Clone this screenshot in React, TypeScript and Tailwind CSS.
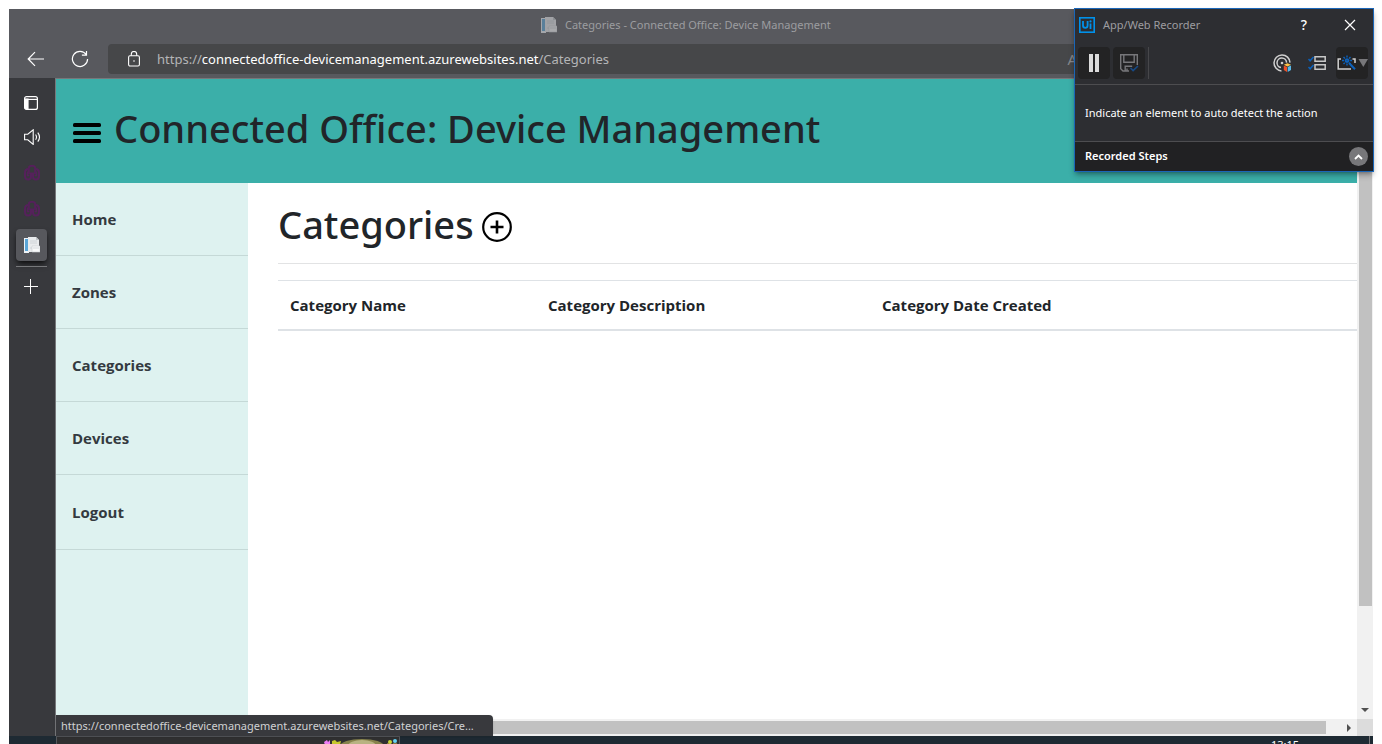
import React from "react";

const navItems = ["Home", "Zones", "Categories", "Devices", "Logout"];

function PageIcon({ className = "" }: { className?: string }) {
  return (
    <svg className={className} width="16" height="16" viewBox="0 0 16 16" aria-hidden="true">
      <path d="M0 1h5v15H0z" fill="#eef3f7" />
      <path d="M1 2h3v12H1z" fill="#5aa5d6" />
      <path d="M4 0h8l3 3v12H4z" fill="#e9ebed" />
      <path d="M12 0v3h3z" fill="#c3c7cb" />
      <path d="M6 4h7M6 6h7M6 11h2" stroke="#cfd4d8" />
      <path d="M8 9h8v6H8z" fill="#f7f8f9" stroke="#c9cdd1" strokeWidth=".6" />
      <path d="M9 11h6" stroke="#d5d9dc" />
    </svg>
  );
}

function ClusterIcon() {
  return (
    <svg width="16" height="16" viewBox="0 0 16 16" fill="none" stroke="#55215b" strokeWidth="2" aria-hidden="true">
      <path d="M4.8 9V3.2a3.2 2.4 0 0 1 6.4 0V9" />
      <path d="M4.6 4C2 4 1 5 1 7.5V11c0 2.5 1 3.5 3.2 3.5S7 13.3 7 11.5v-4" />
      <path d="M11.4 4C14 4 15 5 15 7.5V11c0 2.5-1 3.5-3.2 3.5S9 13.3 9 11.5v-4" />
      <path d="M3.6 6.5v4h1.8M12.4 6.5v4h-1.8" strokeWidth="1.6" />
    </svg>
  );
}

function TitleBar() {
  return (
    <header className="flex shrink-0 flex-col bg-[#58595e]">
      <div className="flex h-[35px] items-center pb-1">
        <div className="ml-[39%] flex items-center gap-2 text-[11px] text-[#9c9da0]">
          <PageIcon className="opacity-50" />
          <span className="pt-px whitespace-nowrap">Categories - Connected Office: Device Management</span>
        </div>
      </div>
      <div className="flex h-[34px] items-center pb-1">
        <button aria-label="Back" className="ml-[18px] h-4 w-[18px] text-white">
          <svg width="18" height="16" viewBox="0 0 18 16" fill="none" stroke="currentColor" strokeWidth="1.2">
            <path d="M8 1.2 1.2 8 8 14.8M1.2 8H17" />
          </svg>
        </button>
        <button aria-label="Refresh" className="ml-[26px] h-[18px] w-[18px] text-white">
          <svg width="18" height="18" viewBox="0 0 18 18" fill="none" stroke="currentColor" strokeWidth="1.2">
            <path d="M15.2 4.5A7.6 7.6 0 1 0 16.6 9M15.5 1v4.2h-4.6" />
          </svg>
        </button>
        <div className="ml-[19px] flex h-[30px] flex-1 items-center rounded-l bg-[#464749] pl-5">
          <svg width="12" height="16" viewBox="0 0 12 16" fill="none" stroke="#fff" strokeWidth="1.1" aria-hidden="true">
            <rect x=".6" y="4.8" width="10.8" height="10.2" rx="1.4" />
            <path d="M3.3 4.8V3.2a2.7 2.7 0 0 1 5.4 0v1.6" />
            <circle cx="6" cy="10" r=".8" fill="#fff" stroke="none" />
          </svg>
          <div
            role="textbox"
            tabIndex={0}
            aria-label="Address"
            className="ml-[17px] pt-px text-[13px] whitespace-nowrap text-[#b4b5b7]"
          >
            https://<span className="text-white">connectedoffice-devicemanagement.azurewebsites.net</span>/Categories
          </div>
          <button aria-label="Read aloud" className="mr-[296px] ml-auto text-[15px] text-[#85868a]">A</button>
        </div>
      </div>
    </header>
  );
}

function TabRail() {
  return (
    <aside className="flex w-[47px] shrink-0 flex-col items-center border-r border-[#77787b] bg-[#38393d] pt-[17px] pr-px">
      <button aria-label="Vertical tabs" className="h-4 w-4">
        <svg width="16" height="16" viewBox="0 0 16 16" fill="none" stroke="#fff" strokeWidth="1.2">
          <rect x=".6" y="1.6" width="12.8" height="12.8" rx="2" />
          <path d="M1 4.4h12" />
          <path d="M1 4h3v10H2l-1-1z" fill="#fff" />
        </svg>
      </button>
      <button aria-label="Mute tab" className="mt-[18px] h-4 w-4">
        <svg width="17" height="16" viewBox="0 0 17 16" fill="none" stroke="#fff" strokeWidth="1.1">
          <path d="M.6 5.2h3.2L9.2.8v14.6l-5.4-4.6H.6z" />
          <path d="M11.6 5.5q1.8 2.6 0 5.2M13.8 3.6q3.4 4.6 0 9" />
        </svg>
      </button>
      <button aria-label="Tab 1" className="mt-5 h-4 w-4"><ClusterIcon /></button>
      <button aria-label="Tab 2" className="mt-5 h-4 w-4"><ClusterIcon /></button>
      <button aria-label="Categories tab" className="mt-3 flex h-8 w-[31px] items-center justify-center rounded bg-[#57585d] shadow-md shadow-black/60">
        <PageIcon />
      </button>
      <div className="mt-[5px] h-px w-[31px] bg-[#77787b]" />
      <button aria-label="New tab" className="mt-3 h-4 w-4">
        <svg width="16" height="16" viewBox="0 0 16 16" stroke="#fff">
          <path d="M6.5 0v15M-1 7.5h15" />
        </svg>
      </button>
    </aside>
  );
}

function CategoriesPage() {
  return (
    <div className="flex min-w-0 flex-1 flex-col border-t border-[#77787b] bg-white font-['Open_Sans','Noto_Sans',sans-serif] text-[#212529]">
      <div className="flex h-[104px] shrink-0 items-center gap-[13px] bg-[#3bafa9] pb-[6px] pl-[17px]">
        <button aria-label="Toggle menu" className="mt-[10px] h-[22px] w-7">
          <svg width="28" height="22" viewBox="0 0 28 22" aria-hidden="true">
            <rect y="1" width="28" height="4" rx="1.6" />
            <rect y="9" width="28" height="4" rx="1.6" />
            <rect y="17" width="28" height="4" rx="1.6" />
          </svg>
        </button>
        <h1 className="font-['Noto_Sans','Open_Sans',sans-serif] text-[38px] leading-[48px] font-medium whitespace-nowrap">
          Connected Office: Device Management
        </h1>
      </div>
      <div className="flex min-h-0 flex-1">
        <nav className="w-48 shrink-0 bg-[#def2f0]">
          {navItems.map((item) => (
            <a key={item} href="#" className="flex h-[73px] items-center border-b border-[#c5d9d7] pl-4 text-[15px] font-bold text-[#343a40] last:h-[75px]">
              {item}
            </a>
          ))}
        </nav>
        <main className="min-w-0 flex-1 pt-[17px] pl-[30px]">
          <div className="flex items-center gap-2 pb-[15px]">
            <h2 className="font-['Noto_Sans','Open_Sans',sans-serif] text-[38px] leading-[48px] font-medium">Categories</h2>
            <button aria-label="Add category" className="mt-[6px] h-[30px] w-[30px]">
              <svg width="30" height="30" viewBox="0 0 30 30" fill="none" stroke="#000" strokeWidth="2.2">
                <circle cx="15" cy="15" r="13.8" />
                <path d="M15 8.5v13M8.5 15h13" strokeWidth="2.6" />
              </svg>
            </button>
          </div>
          <hr className="mb-4 border-[#e2e3e4]" />
          <table className="w-full table-fixed border-collapse text-left text-[15px]">
            <thead>
              <tr className="h-[49px] border-t border-b-2 border-[#dee2e6]">
                <th className="w-[258px] px-3 font-bold">Category Name</th>
                <th className="w-[334px] px-3 font-bold">Category Description</th>
                <th className="px-3 font-bold">Category Date Created</th>
              </tr>
            </thead>
          </table>
        </main>
      </div>
      <div className="flex h-[17px] shrink-0 items-center bg-[#f1f1f1]">
        <div className="h-[13px] flex-1 bg-[#c1c1c1]" />
        <svg className="mr-[6px] ml-[21px]" width="4" height="8" viewBox="0 0 4 8" fill="#505050" aria-hidden="true">
          <path d="M0 0v8l4-4z" />
        </svg>
      </div>
    </div>
  );
}

function VerticalScrollbar() {
  return (
    <div className="flex w-4 shrink-0 flex-col items-center bg-[#f1f1f1]">
      <div className="h-[528px] w-[13px] bg-[#c1c1c1]" />
      <svg className="mt-auto mb-[7px]" width="8" height="4" viewBox="0 0 8 4" fill="#505050" aria-hidden="true">
        <path d="M0 0h8L4 4z" />
      </svg>
      <div className="h-[17px] w-full bg-[#dcdcdc]" />
    </div>
  );
}

function Recorder() {
  return (
    <section className="absolute top-2 right-2 w-[300px] border border-[#1a66b8] bg-[#2d2e32] text-[11px] text-white shadow-md shadow-black/30">
      <div className="flex h-8 items-center pl-1">
        <svg width="16" height="16" viewBox="0 0 16 16" fill="none" stroke="#0091ea" strokeWidth="1.6" aria-hidden="true">
          <rect x=".8" y=".8" width="14.4" height="14.4" />
          <path d="M4 4v4.5a2.3 2.3 0 0 0 4.6 0V4M11.5 6.5V12" strokeWidth="1.8" />
          <circle cx="11.5" cy="4.4" r="1.1" fill="#0091ea" stroke="none" />
        </svg>
        <span className="ml-2 text-[#9d9da0]">App/Web Recorder</span>
        <button aria-label="Help" className="ml-auto w-4 text-sm font-medium">?</button>
        <button aria-label="Close" className="mr-[17px] ml-8 h-3 w-3">
          <svg width="12" height="12" viewBox="0 0 12 12" stroke="#fff" strokeWidth="1.2">
            <path d="m1 1 10 10M11 1 1 11" />
          </svg>
        </button>
      </div>
      <div className="flex h-[44px] items-center border-b border-[#4d4d50] pr-[5px] pl-[3px]">
        <button aria-label="Pause" className="flex h-8 w-8 items-center justify-center rounded bg-[#232324]">
          <svg width="10" height="18" viewBox="0 0 10 18" fill="#dcdcdc"><path d="M0 0h4v18H0zM6 0h4v18H6z" /></svg>
        </button>
        <button aria-label="Save" className="ml-[3px] flex h-8 w-8 items-center justify-center rounded bg-[#232324]">
          <svg width="20" height="20" viewBox="0 0 20 20" fill="none" stroke="#77777a" strokeWidth="1.4">
            <path d="M10 18H4l-2.3-2.3V1.7h16.6V12" />
            <path d="M4.8 1.7v7.6h10.4V1.7M6.2 18v-4.8h7M8 15.5V18" />
            <path d="m11.5 15 2.6 2.6L19 13" stroke="#174a86" strokeWidth="1.7" />
          </svg>
        </button>
        <div className="ml-[3px] h-8 w-px bg-[#47474a]" />
        <button aria-label="Select target" className="ml-auto h-[18px] w-[18px]">
          <svg width="19" height="18" viewBox="0 0 19 18" fill="none" stroke="#d0d0d0" strokeWidth="1.5">
            <path d="M8.5 16.9A8 8 0 1 1 17 8.6" />
            <path d="M8 13.6A4.8 4.8 0 1 1 13.6 8.6" />
            <circle cx="9" cy="9" r="1.3" fill="#d0d0d0" stroke="none" />
            <path d="m10.8 10.8 3.6-1.6 3.6 1.6-3.6 1.7z" fill="#ffc247" stroke="none" />
            <path d="m10.8 11.5 3.2 1.6V18l-3.2-2z" fill="#f04f27" stroke="none" />
            <path d="m14.7 13.1 3.3-1.6V16l-3.3 2z" fill="#59b8e8" stroke="none" />
          </svg>
        </button>
        <button aria-label="Options" className="ml-[17px] h-4 w-[18px]">
          <svg width="18" height="16" viewBox="0 0 18 16" fill="none" stroke="#c8c8c8" strokeWidth="1.5">
            <path d="M7 1.8h10.2v4.4H7zM7 9.8h10.2v4.4H7z" />
            <path d="m.5 4 1.6 1.8L5.5 2M.5 12l1.6 1.8L5.5 10" stroke="#0c62bd" />
          </svg>
        </button>
        <button aria-label="Auto detect" className="ml-[10px] flex h-8 w-8 items-center justify-center rounded bg-[#232324]">
          <svg width="31" height="18" viewBox="0 0 31 18" fill="none" strokeWidth="1.5">
            <path d="M4 5H1.2v10H14M15.5 5h2.5v4" stroke="#d0d0d0" />
            <path d="m12 9 6 6.2" stroke="#0c62bd" strokeWidth="2" />
            <path d="M10 1.5v10M5 6.5h10M6.5 3l7 7M13.5 3l-7 7" stroke="#0c62bd" strokeWidth="1.4" strokeDasharray="2 .7" />
            <path d="M21.5 5H31l-4.7 8z" fill="#77777a" />
          </svg>
        </button>
      </div>
      <p className="flex h-[57px] items-center border-b border-[#4d4d50] px-[10px] pt-px">Indicate an element to auto detect the action</p>
      <div className="flex h-[29px] items-center bg-[#212123] pr-[5px] pl-[10px]">
        <strong className="font-semibold">Recorded Steps</strong>
        <button aria-label="Collapse steps" className="ml-auto flex h-[19px] w-[19px] items-center justify-center rounded-full bg-[#77777a]">
          <svg width="9" height="6" viewBox="0 0 9 6" fill="none" stroke="#fff" strokeWidth="1.8"><path d="m1 5 3.5-3.5L8 5" /></svg>
        </button>
      </div>
    </section>
  );
}

function Taskbar() {
  return (
    <footer className="flex h-2 shrink-0 justify-between overflow-hidden bg-[#1e2a33] pl-[47px] text-[11px] text-white">
      <div className="flex h-2 w-[344px] justify-end border-t border-r border-l border-[#55585c] bg-[#303031]">
        <svg width="78" height="8" viewBox="0 0 78 8" aria-hidden="true">
          <path d="m3 5 3-2 1 2 2-2v5H4z" fill="#ee7df5" />
          <path d="m11 4 3-1 2 2 4-1-1 4h-8z" fill="#c6c92a" />
          <ellipse cx="41" cy="9" rx="22" ry="7" fill="#87834c" />
          <ellipse cx="41" cy="9" rx="14" ry="6" fill="#b8b382" />
          <circle cx="69" cy="5" r="2" fill="#c9d534" />
          <circle cx="74" cy="4" r="2" fill="#64d4f3" />
          <path d="M66 7h4M72 7h4" stroke="#d6b944" />
        </svg>
      </div>
      <div className="mr-[3px] flex h-2 border-r border-[#77787b] pr-[70px]">
        <time className="leading-[18px]">13:15</time>
      </div>
    </footer>
  );
}

export default function App() {
  return (
    <div className="relative h-screen overflow-hidden bg-white px-[9px] pt-[9px] font-['Noto_Sans','Open_Sans',sans-serif]">
      <div className="flex h-full flex-col">
        <TitleBar />
        <div className="relative flex min-h-0 flex-1">
          <TabRail />
          <CategoriesPage />
          <VerticalScrollbar />
          <div className="absolute bottom-0 left-[47px] flex h-[21px] min-w-[437px] items-center rounded-tr bg-[#38393d] px-[5px] pt-px text-[11px] whitespace-nowrap text-[#d0d1d3] shadow">
            https://connectedoffice-devicemanagement.azurewebsites.net/Categories/Cre...
          </div>
        </div>
        <Taskbar />
      </div>
      <Recorder />
    </div>
  );
}
